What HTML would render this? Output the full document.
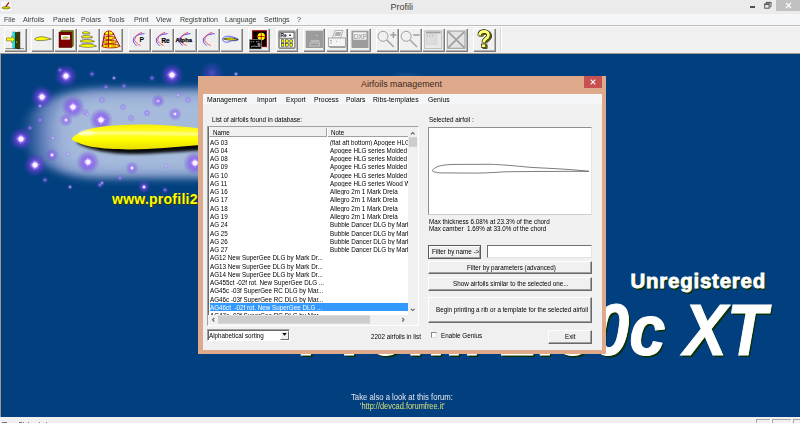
<!DOCTYPE html>
<html><head><meta charset="utf-8"><style>
*{margin:0;padding:0;box-sizing:border-box}
html,body{width:800px;height:423px;overflow:hidden}
body{position:relative;background:#f0f0f0;font-family:"Liberation Sans",sans-serif;color:#000}
.a{position:absolute}
.t{position:absolute;white-space:nowrap;line-height:1}
.mm{font-size:7.8px;color:#3a3a3a;top:15.95px;transform:scaleX(0.91);transform-origin:0 0}
.tb{position:absolute;top:28px;width:21.9px;height:23px;background:#f0f0f0;border-top:1px solid #fff;border-left:1px solid #fff;box-shadow:inset -1px -1px 0 #b4b4b4,1px 1px 0 #7c7c7c}
.tb svg{position:absolute;left:-1px;top:-1px;overflow:visible}
.dm{font-size:7.6px;color:#000;top:95.7px;transform:scaleX(0.9);transform-origin:0 0}
.ctl{font-size:6.4px;color:#000}
.row{position:absolute;left:2px;height:8.33px;font-size:6.4px;line-height:8.33px;white-space:nowrap}
.btn{position:absolute;background:#f0f0f0;border:1px solid #fff;border-right-color:#a0a0a0;border-bottom-color:#a0a0a0;box-shadow:1px 1px 0 #696969;font-size:6.3px;text-align:center;white-space:nowrap}
.dt{position:absolute;white-space:nowrap;font-size:7.3px;line-height:1;transform:scaleX(0.86);transform-origin:0 0;color:#000}
.sb{position:absolute;width:24px;height:24px;background:linear-gradient(90deg,rgba(235,220,255,0),rgba(240,228,255,.55),rgba(235,220,255,0)) center/12px 1.2px no-repeat,linear-gradient(0deg,rgba(235,220,255,0),rgba(240,228,255,.55),rgba(235,220,255,0)) center/1.2px 12px no-repeat,radial-gradient(circle,#fff 0,#fff 1.3px,#f0e8ff 2.1px,rgba(175,125,255,.9) 3.2px,rgba(130,70,240,.65) 5px,rgba(115,60,230,.42) 7.4px,rgba(105,55,225,.16) 10px,rgba(100,50,220,0) 12px)}
.sm{position:absolute;width:14px;height:14px;background:radial-gradient(circle,#fff 0,#f0e8ff .8px,rgba(165,115,255,.65) 1.8px,rgba(125,65,235,.4) 3.5px,rgba(110,55,225,.15) 5.5px,rgba(100,50,220,0) 7px)}
.sp{position:absolute;width:8px;height:8px;background:radial-gradient(circle,rgba(215,195,255,.7) 0,rgba(150,100,255,.45) 1.3px,rgba(120,70,240,.15) 2.8px,rgba(100,50,220,0) 4px)}
.ss{position:absolute;width:6px;height:6px;background:radial-gradient(circle,rgba(240,235,255,.9) 0,rgba(180,150,255,.6) 1px,rgba(140,90,255,.2) 2px,rgba(100,60,220,0) 3px)}
</style></head><body>

<!-- Title bar -->
<div class="a" style="left:0;top:0;width:800px;height:14px;background:#ebebeb"></div>
<div class="t" style="left:390.5px;top:2.5px;font-size:9px;color:#3c3c3c">Profili</div>
<!-- app icon -->
<svg class="a" style="left:0;top:0" width="14" height="14" viewBox="0 0 14 14">
 <rect x="1.2" y="1.8" width="9.6" height="9" fill="#fdfdfd"/>
 <ellipse cx="6.1" cy="7.8" rx="4.1" ry="1.1" fill="#e8e800" stroke="#5a5a00" stroke-width="0.7"/>
 <path d="M5.8 6.6L9 2.4" stroke="#a01010" stroke-width="1.3"/>
</svg>
<!-- window controls -->
<div class="a" style="left:750px;top:6.2px;width:5px;height:1.5px;background:#505050"></div>
<svg class="a" style="left:760px;top:0" width="14" height="12" viewBox="0 0 14 12">
 <rect x="4.7" y="4.2" width="4.4" height="4" fill="none" stroke="#555" stroke-width="1"/>
 <rect x="4.2" y="3.6" width="5.4" height="1.4" fill="#555"/>
 <path d="M6.2 3.4V2.4H11V6.8H9.6" fill="none" stroke="#555" stroke-width="0.9"/>
 <rect x="6" y="2" width="5.2" height="1.2" fill="#555"/>
</svg>
<div class="a" style="left:776px;top:0;width:24px;height:11px;background:#c1c1c1"></div>
<svg class="a" style="left:785px;top:2px" width="7" height="7" viewBox="0 0 7 7"><path d="M1 1L6 6M6 1L1 6" stroke="#fff" stroke-width="1.1"/></svg>

<!-- Menu bar -->
<div class="a" style="left:0;top:14px;width:800px;height:11px;background:#f5f6f7"></div>

<div class="t mm" style="left:4px">File</div>
<div class="t mm" style="left:23px">Airfoils</div>
<div class="t mm" style="left:53px">Panels</div>
<div class="t mm" style="left:81px">Polars</div>
<div class="t mm" style="left:108px">Tools</div>
<div class="t mm" style="left:134px">Print</div>
<div class="t mm" style="left:156px">View</div>
<div class="t mm" style="left:179.5px">Registration</div>
<div class="t mm" style="left:225px">Language</div>
<div class="t mm" style="left:263.5px">Settings</div>
<div class="t mm" style="left:296.5px">?</div>

<!-- Toolbar area -->
<div class="a" style="left:0;top:26px;width:800px;height:27px;background:#f0f0f0"></div>
<div class="a" style="left:0;top:25px;width:800px;height:1px;background:#bdbdbd"></div>
<div class="a" style="left:0;top:26px;width:800px;height:1px;background:#fbfbfb"></div>
<!-- Toolbar buttons -->
<div class="tb" style="left:3.8px"><svg width="23" height="24" viewBox="0 0 23 24">
 <path d="M1.5 20.6H20" stroke="#707070" stroke-width="0.8"/>
 <rect x="8.9" y="4" width="2.7" height="16.2" fill="#00ffff" stroke="#006060" stroke-width="0.4"/>
 <path d="M11.3 4.8L15.8 4V20.8L11.3 20.2Z" fill="#3c3c00" stroke="#000" stroke-width="0.6"/>
 <path d="M2.5 10H7.8V7.8L10.6 11.4L7.8 15V12.8H2.5Z" fill="#ffff00" stroke="#4a4a00" stroke-width="0.5"/>
 <circle cx="12.6" cy="14" r="0.6" fill="#ffff00"/>
</svg></div>
<div class="tb" style="left:31px"><svg width="23" height="24" viewBox="0 0 23 24">
 <path d="M3.5 11C6 8.9 10.5 8.2 14 9.2C17 10 19.5 10.7 20.3 11C17 12 11 12.8 7 12.6C5 12.4 3.8 11.8 3.5 11Z" fill="#ffff00" stroke="#303040" stroke-width="0.55"/>
</svg></div>
<div class="tb" style="left:54px"><svg width="23" height="24" viewBox="0 0 23 24">
 <path d="M5.5 4.3L7 2.5H19.4V18L17.5 19.5Z" fill="#6b6b00" stroke="#303000" stroke-width="0.4"/>
 <rect x="5" y="4.3" width="12.5" height="15.2" fill="#800000" stroke="#300000" stroke-width="0.5"/>
 <rect x="7" y="7" width="8.9" height="4.6" fill="#fff"/>
 <path d="M8.2 9.9C9.5 8.6 12 8.4 14.8 9.6C12 10.6 10 10.6 8.2 9.9Z" fill="#e0e000" stroke="#555" stroke-width="0.3"/>
</svg></div>
<div class="tb" style="left:77px"><svg width="23" height="24" viewBox="0 0 23 24">
 <g fill="#9090b0" opacity="0.7"><path d="M5.5 6C7.5 6.8 10 6.8 13 6L12 7.5H6Z"/><path d="M4.5 10.2C8 11 12 11 15.5 10.3L14 11.8H5.5Z"/><path d="M3.5 14.4C8 15.3 13 15.3 17 14.5L15.5 16H4.5Z"/></g>
 <g fill="#ffff00" stroke="#303030" stroke-width="0.5">
 <path d="M5.1 5C6 3.5 9 3.3 11 4C12 4.4 13 4.9 13.2 5.2C11 5.9 7 6.2 5.1 5Z"/>
 <path d="M4 9C5 7.5 10 7.2 13 8C14.5 8.4 15.5 8.9 15.8 9.2C12 10.2 7 10.4 4 9Z"/>
 <path d="M3 13.2C4.5 11.6 11 11.3 14.5 12.2C16 12.6 17.2 13.1 17.6 13.4C13 14.5 7 14.7 3 13.2Z"/>
 <path d="M2 18C4 16 12 15.6 16 16.7C17.8 17.2 19 17.8 19.5 18.2C14 19.6 7 20 2 18Z"/>
 </g>
</svg></div>
<div class="tb" style="left:100px"><svg width="23" height="24" viewBox="0 0 23 24">
 <g fill="#ffff00" stroke="#b01800" stroke-width="0.9">
 <path d="M4.5 6.5C5 3.5 7 3 9 3C11 3 13 3.5 13.5 6.5C11 7.3 7 7.3 4.5 6.5Z"/>
 <ellipse cx="9.2" cy="10" rx="5.8" ry="1.5"/>
 <ellipse cx="9.8" cy="14" rx="7" ry="1.6"/>
 <ellipse cx="10.6" cy="18" rx="8.8" ry="1.9"/>
 </g>
 <path d="M4.6 5L2.2 18.5M13 5L20.2 19M8.6 3V19" stroke="#a01000" stroke-width="1" fill="none"/>
 <path d="M5 18H8M11 18H16M6 14H8M11 14H14" stroke="#b01800" stroke-width="0.6"/>
</svg></div>
<div class="tb pol" style="left:128px"><svg width="23" height="24" viewBox="0 0 23 24">
 <g class="grid" stroke="#e2e2e2" stroke-width="0.4"><path d="M2 6H21M2 10H21M2 14H21M2 18H21M6 2V22M10 2V22M14 2V22M18 2V22"/></g>
 <path d="M16.5 5.6C13 6 10.5 6.6 8.6 7.6C6.2 9 5.3 10.6 5.3 12.2C5.3 14.5 7 16.6 8.6 17.5" fill="none" stroke="#3a3aff" stroke-width="0.9"/>
 <path d="M14.2 4.3C10.5 5.5 7.8 7.5 7.5 9.6C7.3 11 6.5 11.5 6.6 12.2C7.2 14.2 9.5 16.4 12.6 17.5" fill="none" stroke="#ff3030" stroke-width="0.8"/>
 <text x="11.6" y="13.9" font-family="Liberation Sans" font-weight="bold" font-size="6.9" fill="#000">P</text>
</svg></div>
<div class="tb pol" style="left:151px"><svg width="23" height="24" viewBox="0 0 23 24">
 <g stroke="#e2e2e2" stroke-width="0.4"><path d="M2 6H21M2 10H21M2 14H21M2 18H21M6 2V22M10 2V22M14 2V22M18 2V22"/></g>
 <path d="M16.5 5.6C13 6 10.5 6.6 8.6 7.6C6.2 9 5.3 10.6 5.3 12.2C5.3 14.5 7 16.6 8.6 17.5" fill="none" stroke="#3a3aff" stroke-width="0.9"/>
 <path d="M14.2 4.3C10.5 5.5 7.8 7.5 7.5 9.6C7.3 11 6.5 11.5 6.6 12.2C7.2 14.2 9.5 16.4 12.6 17.5" fill="none" stroke="#ff3030" stroke-width="0.8"/>
 <text x="10.4" y="14.6" font-family="Liberation Sans" font-weight="bold" font-size="6.4" fill="#000" stroke="#000" stroke-width="0.2">Re</text>
</svg></div>
<div class="tb pol" style="left:174px"><svg width="23" height="24" viewBox="0 0 23 24">
 <g stroke="#e2e2e2" stroke-width="0.4"><path d="M2 6H21M2 10H21M2 14H21M2 18H21M6 2V22M10 2V22M14 2V22M18 2V22"/></g>
 <path d="M16.5 5.6C13 6 10.5 6.6 8.6 7.6C6.2 9 5.3 10.6 5.3 12.2C5.3 14.5 7 16.6 8.6 17.5" fill="none" stroke="#3a3aff" stroke-width="0.9"/>
 <path d="M14.2 4.3C10.5 5.5 7.8 7.5 7.5 9.6C7.3 11 6.5 11.5 6.6 12.2C7.2 14.2 9.5 16.4 12.6 17.5" fill="none" stroke="#ff3030" stroke-width="0.8"/>
 <text x="1.6" y="14.4" font-family="Liberation Sans" font-weight="bold" font-size="5.8" fill="#000" stroke="#000" stroke-width="0.25" letter-spacing="0.1">Alpha</text>
</svg></div>
<div class="tb pol" style="left:197px"><svg width="23" height="24" viewBox="0 0 23 24">
 <g stroke="#e2e2e2" stroke-width="0.4"><path d="M2 6H21M2 10H21M2 14H21M2 18H21M6 2V22M10 2V22M14 2V22M18 2V22"/></g>
 <path d="M17.5 5.6C14 6 11.5 6.6 9.6 7.6C7.2 9 6.3 10.6 6.3 12.2C6.3 14.5 8 16.6 9.6 17.5" fill="none" stroke="#3a3aff" stroke-width="0.9"/>
 <path d="M15.2 4.3C11.5 5.5 8.8 7.5 8.5 9.6C8.3 11 7.5 11.5 7.6 12.2C8.2 14.2 10.5 16.4 13.6 17.5" fill="none" stroke="#ff3030" stroke-width="0.8"/>
</svg></div>
<div class="tb pol" style="left:220px"><svg width="23" height="24" viewBox="0 0 23 24">
 <path d="M2.6 10.6C4 8 9 7.6 13 9C16 9.8 18 10.8 18.4 11.5C17 13 14 13 12 12.6C10 14 6 15 4 13.6C2.6 12.6 2.3 11.5 2.6 10.6Z" fill="none" stroke="#3030ff" stroke-width="0.7"/>
 <path d="M3.5 11C6 9.8 11 9.8 14 10.4C16 10.8 17.5 11.2 18 11.6C15 12.4 9 12.6 3.5 11Z" fill="#ffff00" stroke="#000" stroke-width="0.6"/>
</svg></div>
<div class="tb" style="left:247.5px"><svg width="23" height="24" viewBox="0 0 23 24">
 <rect x="4.6" y="2.8" width="13.8" height="15.8" fill="#000" stroke="#a00000" stroke-width="1.1"/>
 <path d="M5 8.3H18M5 14H18M9 3V18M14 3V18" stroke="#600000" stroke-width="0.5"/>
 <circle cx="13.3" cy="8.5" r="3.7" fill="#ffff00"/>
 <path d="M9.6 8.5H17M13.3 4.8V12.2" stroke="#c00000" stroke-width="0.8"/>
 <rect x="1.4" y="11.5" width="11.9" height="9.5" fill="#000" stroke="#a0a0a0" stroke-width="0.6"/>
 <path d="M2.5 13.8H4.2M5 13.8H6.2M8 13.8H9.5M10.2 13.8H11.5M3 19C4.5 18 7 17.9 9 18.6" stroke="#e0e0e0" stroke-width="0.7" fill="none"/>
 <rect x="9.5" y="15" width="3" height="4" fill="#808080"/>
</svg></div>
<div class="tb" style="left:275.6px"><svg width="23" height="24" viewBox="0 0 23 24">
 <rect x="2.7" y="2.9" width="16.5" height="17.6" rx="1" fill="#a8a8a8" stroke="#606060" stroke-width="0.6"/>
 <rect x="4" y="4.6" width="13.9" height="5.4" fill="#fff" stroke="#303030" stroke-width="0.4"/>
 <text x="4.5" y="9.2" font-family="Liberation Sans" font-weight="bold" font-size="4.8" fill="#000">Re</text>
 <rect x="13.2" y="6.6" width="1.6" height="1.4" fill="#000"/>
 <rect x="4" y="11" width="13.9" height="8" fill="#fff"/>
 <g fill="#ffff00" stroke="#000" stroke-width="0.5">
 <rect x="5.3" y="11.8" width="2.6" height="2.6"/><rect x="9.6" y="11.8" width="2.6" height="2.6"/><rect x="13.9" y="11.8" width="2.6" height="2.6"/>
 <rect x="5.3" y="15.6" width="2.6" height="2.6"/><rect x="9.6" y="15.6" width="2.6" height="2.6"/><rect x="13.9" y="15.6" width="2.6" height="2.6"/>
 </g>
</svg></div>
<div class="tb" style="left:302.5px"><svg width="23" height="24" viewBox="0 0 23 24">
 <rect x="2.7" y="2.7" width="17.3" height="17.3" fill="#9c9c9c"/>
 <path d="M13 7.5H14.2M7.5 13H16.5" stroke="#e8e8e8" stroke-width="0.8"/>
 <rect x="7" y="15" width="9.5" height="3" fill="none" stroke="#e0e0e0" stroke-width="0.6"/>
</svg></div>
<div class="tb" style="left:325.5px"><svg width="23" height="24" viewBox="0 0 23 24">
 <path d="M6.5 10L9 2.5H17L14.5 10Z" fill="#f4f4f4" stroke="#a0a0a0" stroke-width="0.8"/>
 <path d="M9.8 4H15.2L14 8H8.6Z" fill="#b0b0b0"/>
 <rect x="2.5" y="10" width="17" height="8.5" fill="#f4f4f4" stroke="#a0a0a0" stroke-width="0.9"/>
 <rect x="3.5" y="18.5" width="16" height="1.5" fill="#a0a0a0"/>
 <path d="M4 12.5H6M5 13.5V16M10 13.5H11" stroke="#a0a0a0" stroke-width="0.8"/>
</svg></div>
<div class="tb" style="left:348.5px"><svg width="23" height="24" viewBox="0 0 23 24">
 <rect x="2.5" y="2.7" width="17" height="17.3" rx="0.8" fill="#9c9c9c"/>
 <rect x="4.3" y="4.3" width="13.2" height="7.4" fill="#f4f4f4"/>
 <text x="4.6" y="10.6" font-family="Liberation Sans" font-size="6.6" fill="#a0a0a0" stroke="#a0a0a0" stroke-width="0.2">DXF</text>
</svg></div>
<div class="tb" style="left:376px"><svg width="23" height="24" viewBox="0 0 23 24">
 <circle cx="7" cy="8.3" r="5" fill="none" stroke="#a0a0a0" stroke-width="1"/>
 <path d="M10.8 12L17.8 19" stroke="#a0a0a0" stroke-width="1.4"/>
 <path d="M14.3 7H20.5M17.4 4V10" stroke="#a0a0a0" stroke-width="1.5"/>
</svg></div>
<div class="tb" style="left:399px"><svg width="23" height="24" viewBox="0 0 23 24">
 <circle cx="7.2" cy="8.3" r="5" fill="none" stroke="#a0a0a0" stroke-width="1"/>
 <path d="M11 12L18 19" stroke="#a0a0a0" stroke-width="1.4"/>
 <path d="M14.2 7H20.6" stroke="#a0a0a0" stroke-width="1.5"/>
</svg></div>
<div class="tb" style="left:422px"><svg width="23" height="24" viewBox="0 0 23 24">
 <rect x="2.7" y="2.9" width="17" height="17.5" fill="#e8e8e8" stroke="#b4b4b4" stroke-width="0.8"/>
 <rect x="4" y="3.6" width="14.5" height="1.8" fill="#a0a0a0"/>
 <rect x="4" y="6.5" width="11" height="10" fill="#dcdcdc" stroke="#c4c4c4" stroke-width="0.4"/>
 <path d="M5 8H6M7.5 8H8.5M10 8H11" stroke="#909090" stroke-width="0.7"/>
</svg></div>
<div class="tb" style="left:445px"><svg width="23" height="24" viewBox="0 0 23 24">
 <rect x="2.4" y="3.1" width="17.6" height="17.2" fill="#e4e4e4" stroke="#a8a8a8" stroke-width="1.2"/>
 <path d="M3 3.6L19.5 19.8M19.5 3.6L3 19.8" stroke="#a0a0a0" stroke-width="1.7"/>
</svg></div>
<div class="tb" style="left:473px"><svg width="23" height="24" viewBox="0 0 23 24">
 <g transform="translate(1.3,0.9)">
 <path d="M6.6 7.6C6.6 4.6 8.6 3.4 11 3.4C13.8 3.4 15.4 5.1 15.4 7.2C15.4 9.5 13.6 10.4 12.2 11.4C11.1 12.2 10.7 13 10.7 14.4" fill="none" stroke="#000" stroke-width="4.4"/>
 <path d="M6.6 7.6C6.6 4.6 8.6 3.4 11 3.4C13.8 3.4 15.4 5.1 15.4 7.2C15.4 9.5 13.6 10.4 12.2 11.4C11.1 12.2 10.7 13 10.7 14.4" fill="none" stroke="#8a8a00" stroke-width="3.2"/>
 <rect x="8.6" y="16" width="4.2" height="3.6" fill="#8a8a00" stroke="#000" stroke-width="0.6"/>
 </g>
 <path d="M6.6 7.6C6.6 4.6 8.6 3.4 11 3.4C13.8 3.4 15.4 5.1 15.4 7.2C15.4 9.5 13.6 10.4 12.2 11.4C11.1 12.2 10.7 13 10.7 14.4" fill="none" stroke="#000" stroke-width="4.2"/>
 <path d="M6.6 7.6C6.6 4.6 8.6 3.4 11 3.4C13.8 3.4 15.4 5.1 15.4 7.2C15.4 9.5 13.6 10.4 12.2 11.4C11.1 12.2 10.7 13 10.7 14.4" fill="none" stroke="#ffff70" stroke-width="3"/>
 <rect x="8.6" y="16" width="4.2" height="3.6" fill="#ffff70" stroke="#000" stroke-width="0.6"/>
</svg></div>
<div class="a" style="left:499.5px;top:27px;width:1px;height:25px;background:#d8d8d8"></div>
<div class="a" style="left:500.5px;top:27px;width:1px;height:25px;background:#fff"></div>


<!-- Blue splash -->
<div class="a" style="left:1px;top:53px;width:799px;height:364px;background:#013f7e;overflow:hidden" id="splash">
<div class="a" style="left:20px;top:36px;width:570px;height:89px;border-radius:80px/44px;background:linear-gradient(90deg,rgba(120,140,205,0) 0,rgba(125,145,205,.75) 22px,#8aa0d0 45px);filter:blur(4px)"></div>
<div class="a" style="left:40px;top:44px;width:540px;height:73px;border-radius:70px/36px;background:linear-gradient(90deg,rgba(168,189,220,0) 0,rgba(168,189,220,.8) 25px,#a6bbdb 50px);filter:blur(6px)"></div>
<div class="sb" style="left:53.0px;top:11.4px"></div>
<div class="sb" style="left:159.0px;top:9.5px"></div>
<div class="sb" style="left:28.6px;top:31.5px"></div>
<div class="sb" style="left:59.6px;top:42.0px"></div>
<div class="sb" style="left:88.0px;top:55.0px"></div>
<div class="sb" style="left:7.8px;top:74.0px"></div>
<div class="sb" style="left:21.8px;top:99.5px"></div>
<div class="sb" style="left:74.7px;top:97.0px"></div>
<div class="sb" style="left:181.7px;top:97.6px"></div>
<div class="a" style="left:199px;top:8px;width:24px;height:24px;background:radial-gradient(circle,rgba(140,90,250,.55) 0,rgba(120,70,240,.3) 5px,rgba(100,50,220,0) 12px)"></div>
<div class="sm" style="left:123.6px;top:108.3px"></div>
<div class="sm" style="left:150.0px;top:41.4px"></div>
<div class="sm" style="left:166.7px;top:53.5px"></div>
<div class="sm" style="left:58.0px;top:60.3px"></div>
<div class="sm" style="left:44.0px;top:95.0px"></div>
<div class="sm" style="left:135.7px;top:127.2px"></div>
<div class="ss" style="left:110.0px;top:21.6px"></div>
<div class="ss" style="left:173.7px;top:39.3px"></div>
<div class="ss" style="left:143.4px;top:56.7px"></div>
<div class="ss" style="left:35.7px;top:50.0px"></div>
<div class="ss" style="left:66.0px;top:131.2px"></div>
<div class="ss" style="left:64.0px;top:98.3px"></div>
<div class="ss" style="left:162.4px;top:110.4px"></div>
<div class="ss" style="left:98.0px;top:127.4px"></div>
<div class="ss" style="left:83.0px;top:57.5px"></div>
<div class="ss" style="left:232.0px;top:18.0px"></div>
<div class="ss" style="left:49.0px;top:82.0px"></div>
<div class="a" style="left:380px;top:14px;width:50px;height:22px;background:radial-gradient(ellipse 25px 11px at 50% 70%,rgba(110,145,195,.45),rgba(110,145,195,0))"></div>
<div class="sp" style="left:100.7px;top:29.5px"></div>
<div class="sp" style="left:119.4px;top:28.7px"></div>
<div class="sp" style="left:86.6px;top:17.0px"></div>
<div class="sp" style="left:146.5px;top:21.2px"></div>
<div class="sp" style="left:96.5px;top:43.2px"></div>
<div class="sp" style="left:117.7px;top:50.2px"></div>
<div class="sp" style="left:80.3px;top:55.2px"></div>
<div class="sp" style="left:125.5px;top:61.0px"></div>
<div class="sp" style="left:183.4px;top:42.7px"></div>
<div class="sp" style="left:153.6px;top:44.4px"></div>
<div class="sp" style="left:141.7px;top:56.0px"></div>
<div class="sp" style="left:25.0px;top:71.0px"></div>
<div class="sp" style="left:55.0px;top:13.0px"></div>
<div class="sp" style="left:145.0px;top:93.0px"></div>
<div class="sp" style="left:115.0px;top:121.0px"></div>
<div class="sp" style="left:95.0px;top:128.0px"></div>
<div class="sp" style="left:160.0px;top:133.0px"></div>
<div class="sp" style="left:40.0px;top:123.0px"></div>
<div class="sp" style="left:165.0px;top:73.0px"></div>
<div class="sp" style="left:35.0px;top:63.0px"></div>
<!-- airfoil shadow -->
<svg class="a" style="left:0;top:0" width="799" height="364" viewBox="0 0 799 364">
 <defs>
  <filter id="bl" x="-10%" y="-50%" width="120%" height="200%"><feGaussianBlur stdDeviation="1.8"/></filter>
  <filter id="bl2" x="-10%" y="-100%" width="120%" height="300%"><feGaussianBlur stdDeviation="0.9"/></filter>
  <linearGradient id="yg" x1="0" y1="0" x2="0" y2="1">
   <stop offset="0" stop-color="#f8f000"/><stop offset="0.35" stop-color="#ffff30"/><stop offset="0.6" stop-color="#ffff00"/><stop offset="1" stop-color="#e8dc00"/>
  </linearGradient>
 </defs>
 <path d="M76 90C88 97 110 101 129 101C150 101 175 99 199 97.5V88C175 90 150 92 129 92C105 92 88 90 76 87Z" fill="#000" opacity="0.95" filter="url(#bl)"/>
 <path d="M70.4 85.9C74 82 78 79.5 85 77C95 73.5 115 71.5 137.75 71.4C160 71.4 185 73.5 199 75.5V92C175 94 150 96.4 129 96.4C110 96.4 95 95 85 92.5C78 90.5 73 88 70.4 85.9Z" fill="url(#yg)"/>
 <path d="M78 81C95 79.5 150 80 199 81.5" stroke="#fffbd8" stroke-width="2.2" fill="none" opacity="0.7" filter="url(#bl2)"/>
 <ellipse cx="86" cy="80" rx="8" ry="2.5" fill="#fffff0" opacity="0.6" filter="url(#bl2)"/>
</svg>
<div class="t" style="left:111px;top:138.5px;font-size:14px;font-weight:bold;color:#ffff00;text-shadow:1px 1px 0 #3a3a00;letter-spacing:0.25px">www.profili2.com</div>
<div class="t" style="left:629.5px;top:218px;font-size:20.5px;font-weight:bold;color:#fff;text-shadow:1.5px 1.5px 0 #0a3000;letter-spacing:0.75px;-webkit-text-stroke:0.8px #fff">Unregistered</div>
<div class="t" id="big" style="left:299px;top:242px;font-size:71.7px;font-weight:bold;font-style:italic;color:#fff;text-shadow:1.8px 1.8px 0 #0a3000;-webkit-text-stroke:1px #fff;transform-origin:0 0;transform:scaleX(0.908)">Profili 2.30c XT</div>
<div class="t" style="left:349.5px;top:341.3px;font-size:8.2px;color:#e4e6ee;transform:scaleX(0.94);transform-origin:0 0">Take also a look at this forum:</div>
<div class="t" style="left:358.5px;top:350.1px;font-size:8.2px;color:#d8e07c;transform:scaleX(0.905);transform-origin:0 0">'http://devcad.forumfree.it'</div>

</div>

<div class="a" style="left:0;top:53px;width:800px;height:0.9px;background:#a39a8e"></div>
<div class="a" style="left:0;top:53px;width:1.1px;height:364px;background:#a39a8e"></div>
<!-- Status bar -->
<div class="a" style="left:0;top:416.7px;width:800px;height:6.3px;background:#f0f0f0"></div>
<div class="a" style="left:756px;top:419.3px;width:14px;height:4px;border-top:1px solid #a8a8a8;border-left:1px solid #a8a8a8"></div>
<div class="a" style="left:771.9px;top:419.3px;width:19.3px;height:4px;border-top:1px solid #a8a8a8;border-left:1px solid #a8a8a8"></div>
<div class="a" style="left:769.6px;top:419.3px;width:1px;height:4px;background:#fff"></div>
<div class="a" style="left:791px;top:419.3px;width:1px;height:4px;background:#fff"></div>
<div class="a" style="left:793.3px;top:419.3px;width:7px;height:4px;border-top:1px solid #a8a8a8;border-left:1px solid #a8a8a8"></div>
<div class="a" style="left:2px;top:421.6px;width:4.5px;height:1.4px;background:#707070"></div>
<div class="a" style="left:19px;top:421.6px;width:2.5px;height:1.4px;background:#707070"></div>
<div class="a" style="left:23px;top:421.6px;width:1px;height:1.4px;background:#808080"></div>
<div class="a" style="left:28px;top:421.6px;width:1.2px;height:1.4px;background:#808080"></div>
<div class="a" style="left:38.5px;top:421.6px;width:1.2px;height:1.4px;background:#808080"></div>
<div class="a" style="left:46px;top:421.6px;width:1.2px;height:1.4px;background:#808080"></div>

<!-- Dialog -->
<div class="a" style="left:198px;top:76px;width:408px;height:278px;background:#dfa98b"></div>
<div class="t" style="left:361px;top:80px;font-size:8.9px;color:#3d2a20">Airfoils management</div>
<div class="a" style="left:584px;top:76px;width:18px;height:11.5px;background:#c75050"></div>
<svg class="a" style="left:590px;top:79px" width="6" height="6" viewBox="0 0 6 6"><path d="M0.7 0.7L5.3 5.3M5.3 0.7L0.7 5.3" stroke="#fff" stroke-width="1.1"/></svg>
<div class="a" style="left:203px;top:93.5px;width:398.5px;height:256px;background:#f0f0f0"></div>
<div class="a" style="left:203px;top:93.5px;width:398.5px;height:10.5px;background:#f5f6f7"></div>
<div class="t dm" style="left:206.8px">Management</div>
<div class="t dm" style="left:256.9px">Import</div>
<div class="t dm" style="left:286.2px">Export</div>
<div class="t dm" style="left:313.8px">Process</div>
<div class="t dm" style="left:345.9px">Polars</div>
<div class="t dm" style="left:373px">Ribs-templates</div>
<div class="t dm" style="left:427.6px">Genius</div>
<div class="a" style="left:207px;top:126px;width:212px;height:199.5px;background:#fff;border-top:1px solid #a0a0a0;border-left:1px solid #a0a0a0;border-right:1px solid #fff;border-bottom:1px solid #fff;box-shadow:inset 1px 1px 0 #696969;overflow:hidden">
<div class="a" style="left:1px;top:0;width:200.5px;height:9.5px;background:#f0f0f0;border-bottom:1px solid #a0a0a0;border-left:1px solid #fff"></div>
<div class="a" style="left:117.7px;top:0.5px;width:1px;height:9px;background:#a0a0a0"></div>
<div class="a" style="left:118.7px;top:0.5px;width:1px;height:9px;background:#fff"></div>
<div class="dt" style="left:5.00px;top:2.10px">Name</div>
<div class="dt" style="left:122.60px;top:2.10px">Note</div>
<div class="a" style="left:0;top:9.5px;width:199.8px;height:178.9px;overflow:hidden">
<div class="dt" style="left:2.20px;top:2.04px">AG 03</div>
<div class="a" style="left:121.60px;top:1.00px;width:78.20px;height:8.33px;overflow:hidden"><div class="dt" style="left:0.00px;top:1.04px">(flat aft bottom) Apogee HLG series</div></div>
<div class="dt" style="left:2.20px;top:10.31px">AG 04</div>
<div class="a" style="left:121.60px;top:9.27px;width:78.20px;height:8.33px;overflow:hidden"><div class="dt" style="left:0.00px;top:1.04px">Apogee HLG series Molded</div></div>
<div class="dt" style="left:2.20px;top:18.58px">AG 08</div>
<div class="a" style="left:121.60px;top:17.54px;width:78.20px;height:8.33px;overflow:hidden"><div class="dt" style="left:0.00px;top:1.04px">Apogee HLG series Molded</div></div>
<div class="dt" style="left:2.20px;top:26.85px">AG 09</div>
<div class="a" style="left:121.60px;top:25.81px;width:78.20px;height:8.33px;overflow:hidden"><div class="dt" style="left:0.00px;top:1.04px">Apogee HLG series Molded</div></div>
<div class="dt" style="left:2.20px;top:35.12px">AG 10</div>
<div class="a" style="left:121.60px;top:34.08px;width:78.20px;height:8.33px;overflow:hidden"><div class="dt" style="left:0.00px;top:1.04px">Apogee HLG series Molded</div></div>
<div class="dt" style="left:2.20px;top:43.39px">AG 11</div>
<div class="a" style="left:121.60px;top:42.35px;width:78.20px;height:8.33px;overflow:hidden"><div class="dt" style="left:0.00px;top:1.04px">Apogee HLG series Wood Wing</div></div>
<div class="dt" style="left:2.20px;top:51.66px">AG 16</div>
<div class="a" style="left:121.60px;top:50.62px;width:78.20px;height:8.33px;overflow:hidden"><div class="dt" style="left:0.00px;top:1.04px">Allegro 2m 1 Mark Drela</div></div>
<div class="dt" style="left:2.20px;top:59.93px">AG 17</div>
<div class="a" style="left:121.60px;top:58.89px;width:78.20px;height:8.33px;overflow:hidden"><div class="dt" style="left:0.00px;top:1.04px">Allegro 2m 1 Mark Drela</div></div>
<div class="dt" style="left:2.20px;top:68.20px">AG 18</div>
<div class="a" style="left:121.60px;top:67.16px;width:78.20px;height:8.33px;overflow:hidden"><div class="dt" style="left:0.00px;top:1.04px">Allegro 2m 1 Mark Drela</div></div>
<div class="dt" style="left:2.20px;top:76.47px">AG 19</div>
<div class="a" style="left:121.60px;top:75.43px;width:78.20px;height:8.33px;overflow:hidden"><div class="dt" style="left:0.00px;top:1.04px">Allegro 2m 1 Mark Drela</div></div>
<div class="dt" style="left:2.20px;top:84.74px">AG 24</div>
<div class="a" style="left:121.60px;top:83.70px;width:78.20px;height:8.33px;overflow:hidden"><div class="dt" style="left:0.00px;top:1.04px">Bubble Dancer DLG by Mark Drela</div></div>
<div class="dt" style="left:2.20px;top:93.01px">AG 25</div>
<div class="a" style="left:121.60px;top:91.97px;width:78.20px;height:8.33px;overflow:hidden"><div class="dt" style="left:0.00px;top:1.04px">Bubble Dancer DLG by Mark Drela</div></div>
<div class="dt" style="left:2.20px;top:101.28px">AG 26</div>
<div class="a" style="left:121.60px;top:100.24px;width:78.20px;height:8.33px;overflow:hidden"><div class="dt" style="left:0.00px;top:1.04px">Bubble Dancer DLG by Mark Drela</div></div>
<div class="dt" style="left:2.20px;top:109.55px">AG 27</div>
<div class="a" style="left:121.60px;top:108.51px;width:78.20px;height:8.33px;overflow:hidden"><div class="dt" style="left:0.00px;top:1.04px">Bubble Dancer DLG by Mark Drela</div></div>
<div class="dt" style="left:2.20px;top:117.82px">AG12 New SuperGee DLG by Mark Dr...</div>
<div class="dt" style="left:2.20px;top:126.09px">AG13 New SuperGee DLG by Mark Dr...</div>
<div class="dt" style="left:2.20px;top:134.36px">AG14 New SuperGee DLG by Mark Dr...</div>
<div class="dt" style="left:2.20px;top:142.63px">AG455ct -02f rot. New SuperGee DLG ...</div>
<div class="dt" style="left:2.20px;top:150.90px">AG45c -03f SuperGee RC DLG by Mar...</div>
<div class="dt" style="left:2.20px;top:159.17px">AG46c -03f SuperGee RC DLG by Mar...</div>
<div class="a" style="left:1.75px;top:166.30px;width:198.05px;height:8.5px;background:#3399ff"></div>
<div class="dt" style="left:2.20px;top:167.44px;color:#fff">AG46ct&nbsp; -02f rot. New SuperGee DLG ...</div>
<div class="dt" style="left:2.20px;top:175.71px">AG47c -03f SuperGee RC DLG by Mar...</div>
</div>
<div class="a" style="left:199.8px;top:0;width:11.2px;height:188.4px;background:#f0f0f0"></div>
<svg class="a" style="left:199.8px;top:0" width="9.5" height="189.4" viewBox="0 0 9.5 189.4" ><path d="M2.9 7.4L4.75 5.6L6.6 7.4" fill="none" stroke="#606060" stroke-width="1.1"/><rect x="0.8" y="10.2" width="8.2" height="9.6" fill="#cdcdcd"/><path d="M2.9 181.8L4.75 183.6L6.6 181.8" fill="none" stroke="#606060" stroke-width="1.1"/></svg>
<div class="a" style="left:0;top:188.4px;width:211px;height:10.5px;background:#f0f0f0"></div>
<svg class="a" style="left:0;top:188.4px" width="201" height="9.5" viewBox="0 0 201 9.5"><path d="M6.3 2.9L4.5 4.75L6.3 6.6" fill="none" stroke="#606060" stroke-width="1.1"/><rect x="10" y="0.5" width="152" height="8.1" fill="#cdcdcd"/><path d="M194.2 2.9L196 4.75L194.2 6.6" fill="none" stroke="#606060" stroke-width="1.1"/></svg>
</div>
<div class="dt" style="left:211.60px;top:115.90px">List of airfoils found in database:</div>
<div class="dt" style="left:429.00px;top:115.70px">Selected airfoil :</div>
<div class="a" style="left:428px;top:127.2px;width:163.7px;height:88px;background:#fff;border-top:1px solid #8f8f8f;border-left:1px solid #8f8f8f;border-right:1px solid #e4e4e4;border-bottom:1px solid #d0d0d0"></div>
<svg class="a" style="left:0;top:0" width="800" height="423" viewBox="0 0 800 423"><path d="M432.2 170.75C434 168 437 166.2 441.7 165.5C446 164.8 449 164.5 455 164.4L490 164.3C500 164.6 508 165.2 531.1 167.4L555.3 168.65L572 169.7L588.9 171.3L532.2 171.5L504.7 171.8C490 172.8 480 173.1 475.3 173.1L440.6 172.9C436 172.5 433 171.8 432.2 170.75Z" fill="none" stroke="#5a5a5a" stroke-width="0.8"/></svg>
<div class="dt" style="left:428.75px;top:217.80px">Max thickness 6.08% at 23.3% of the chord</div>
<div class="dt" style="left:428.75px;top:225.20px">Max camber&nbsp; 1.69% at 33.0% of the chord</div>
<div class="a" style="left:428.30px;top:245.30px;width:52.70px;height:13.30px;background:#f0f0f0;border:1px solid #5a5a5a;box-shadow:inset 1px 1px 0 #fff,inset -1px -1px 0 #a0a0a0"></div><div class="dt" style="left:432.00px;top:248.19px">Filter by name -&gt;</div>
<div class="a" style="left:487px;top:245px;width:105px;height:12.5px;background:#fff;border-top:1px solid #6f6f6f;border-left:1px solid #6f6f6f;border-right:1px solid #e4e4e4;border-bottom:1px solid #e4e4e4"></div>
<div class="a" style="left:428.30px;top:260.80px;width:163.80px;height:13.40px;background:#f0f0f0;border-top:1px solid #fff;border-left:1px solid #fff;border-right:1px solid #696969;border-bottom:1px solid #696969;box-shadow:inset -1px -1px 0 #a0a0a0"></div><div class="dt" style="left:466.80px;top:263.74px">Filter by parameters (advanced)</div>
<div class="a" style="left:428.30px;top:277.10px;width:163.80px;height:13.50px;background:#f0f0f0;border-top:1px solid #fff;border-left:1px solid #fff;border-right:1px solid #696969;border-bottom:1px solid #696969;box-shadow:inset -1px -1px 0 #a0a0a0"></div><div class="dt" style="left:453.30px;top:280.24px">Show airfoils similar to the selected one...</div>
<div class="a" style="left:428.30px;top:296.50px;width:163.80px;height:26.70px;background:#f0f0f0;border-top:1px solid #fff;border-left:1px solid #fff;border-right:1px solid #696969;border-bottom:1px solid #696969;box-shadow:inset -1px -1px 0 #a0a0a0"></div><div class="dt" style="left:435.75px;top:306.19px">Begin printing a rib or a template for the selected airfoil</div>
<div class="a" style="left:548.30px;top:330.00px;width:43.80px;height:13.50px;background:#f0f0f0;border-top:1px solid #fff;border-left:1px solid #fff;border-right:1px solid #696969;border-bottom:1px solid #696969;box-shadow:inset -1px -1px 0 #a0a0a0"></div><div class="dt" style="left:565.00px;top:333.44px">Exit</div>
<div class="a" style="left:430.5px;top:331.6px;width:6.6px;height:6.6px;background:#fff;border-top:1px solid #8a8a8a;border-left:1px solid #8a8a8a;border-right:1px solid #e0e0e0;border-bottom:1px solid #e0e0e0"></div>
<div class="dt" style="left:441.00px;top:331.84px">Enable Genius</div>
<div class="a" style="left:207.25px;top:329px;width:82.75px;height:11.6px;background:#fff;border-top:1px solid #a0a0a0;border-left:1px solid #a0a0a0;border-right:1px solid #fff;border-bottom:1px solid #fff;box-shadow:inset 1px 1px 0 #696969"></div>
<div class="a" style="left:280px;top:330.5px;width:9px;height:9.3px;background:#f0f0f0;border-top:1px solid #fff;border-left:1px solid #fff;border-right:1px solid #696969;border-bottom:1px solid #696969"></div>
<svg class="a" style="left:282px;top:333.2px" width="5" height="3" viewBox="0 0 5 3"><path d="M0.3 0L4.7 0L2.5 2.8Z" fill="#000"/></svg>
<div class="dt" style="left:209.40px;top:331.69px">Alphabetical sorting</div>
<div class="dt" style="left:370.80px;top:332.94px">2202 airfoils in list</div>

</body></html>
